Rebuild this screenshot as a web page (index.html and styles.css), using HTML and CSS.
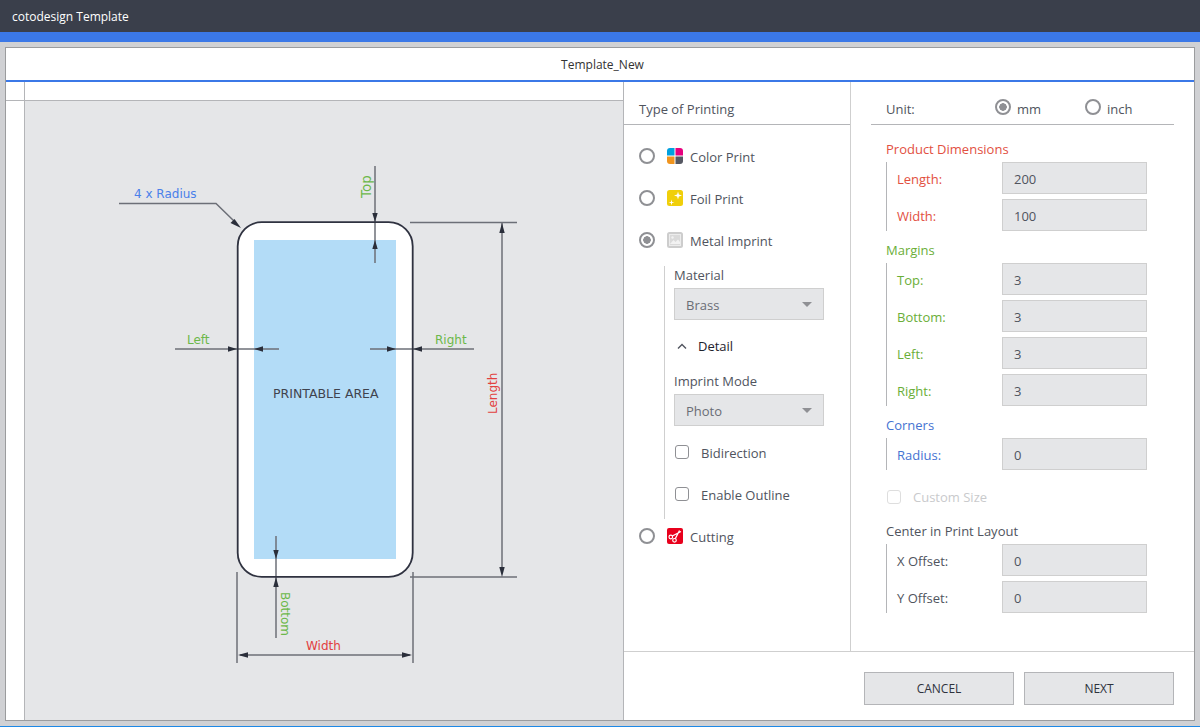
FILE: index.html
```html
<!DOCTYPE html>
<html lang="en">
<head>
<meta charset="utf-8">
<title>cotodesign Template</title>
<link rel="stylesheet" href="styles.css">
</head>
<body>
<header class="titlebar">cotodesign Template</header>
<div class="accent"></div>
<div class="workspace">
  <section class="window">
    <div class="window-title">Template_New</div>
    <div class="main">
      <div class="preview">
        <div class="ruler-top"><div class="ruler-corner"></div></div>
        <div class="preview-body">
          <div class="ruler-left"></div>
          <div class="canvas">
            <svg class="diagram" width="598" height="619" viewBox="25 101 598 619">
              <rect class="sheet" x="237.700" y="222.200" width="175" height="354.600" rx="24"/>
              <rect class="printable" x="254" y="240" width="142" height="319"/>
              <g class="dim">
                <path d="M119 203.500H216L234 221"/>
                <path d="M375 166V263"/>
                <path d="M175 349H279"/>
                <path d="M370 349H474"/>
                <path d="M276 536V638"/>
                <path d="M410 222.500H517"/>
                <path d="M410 577H517"/>
                <path d="M502 223V570"/>
                <path d="M237 572V663"/>
                <path d="M413 572V663"/>
                <path d="M240 655H410"/>
              </g>
              <g class="head">
                <path d="M241 228L230.500 223L234.500 219Z"/>
                <path d="M375 222L372.300 213H377.700Z"/>
                <path d="M375 240L372.300 249H377.700Z"/>
                <path d="M237 349L228 346.300V351.700Z"/>
                <path d="M254 349L263 346.300V351.700Z"/>
                <path d="M396 349L387 346.300V351.700Z"/>
                <path d="M413 349L422 346.300V351.700Z"/>
                <path d="M276 559L273.300 550H278.700Z"/>
                <path d="M276 577L273.300 587H278.700Z"/>
                <path d="M502 223L499.300 233H504.700Z"/>
                <path d="M502 577L499.300 567H504.700Z"/>
                <path d="M238 655L248 652.300V657.700Z"/>
                <path d="M412 655L402 652.300V657.700Z"/>
              </g>
              <rect class="sheet-edge" x="237.700" y="222.200" width="175" height="354.600" rx="24"/>
              <text class="t-blue" x="134" y="198">4 x Radius</text>
              <text class="t-green" x="187" y="344">Left</text>
              <text class="t-green" x="435" y="344">Right</text>
              <text class="t-green t-top" transform="translate(370.500 198) rotate(-90)">Top</text>
              <text class="t-green" transform="translate(281 592) rotate(90)">Bottom</text>
              <text class="t-red" transform="translate(497 414) rotate(-90)">Length</text>
              <text class="t-red" x="306" y="650">Width</text>
              <text class="t-dark" x="273" y="398">PRINTABLE AREA</text>
            </svg>
          </div>
        </div>
      </div>
      <div class="panel">
        <div class="panel-top">
          <div class="type-col">
            <div class="col-head">Type of Printing</div>
            <div class="type-list">
              <div class="type-row">
                <span class="radio"></span>
                <svg class="icon" viewBox="0 0 16 16"><path fill="#00a0df" d="M0 7.500V3a3 3 0 0 1 3-3h4.500v7.500z"/><path fill="#e6007e" d="M8.500 0H13a3 3 0 0 1 3 3v4.500H8.500z"/><path fill="#f0941e" d="M0 8.500h7.500V16H3a3 3 0 0 1-3-3z"/><path fill="#555862" d="M8.500 8.500H16V13a3 3 0 0 1-3 3H8.500z"/></svg>
                <span>Color Print</span>
              </div>
              <div class="type-row">
                <span class="radio"></span>
                <svg class="icon" viewBox="0 0 16 16"><rect width="16" height="16" rx="2.500" fill="#f0cf0a"/><path fill="#fff" d="M11 1.500l.9 3.100 3.100.9-3.100.9-.9 3.100-.9-3.100-3.100-.9 3.100-.9zM4.500 9.500l.6 2.400 2.400.6-2.400.6-.6 2.400-.6-2.400-2.400-.6 2.400-.6z"/></svg>
                <span>Foil Print</span>
              </div>
              <div class="type-row">
                <span class="radio radio-on"></span>
                <svg class="icon" viewBox="0 0 16 16"><rect width="16" height="16" rx="2.500" fill="#cdcdcd"/><rect x="2.500" y="2.500" width="11" height="11" fill="#dadada" stroke="#ececec"/><path fill="#f2f2f2" d="M3 12l3.500-4 2 2 2.500-2.500 2 2.500v2z"/><circle cx="5.500" cy="5.500" r="1.200" fill="#f2f2f2"/></svg>
                <span>Metal Imprint</span>
              </div>
              <div class="type-sub">
                <div class="field-label">Material</div>
                <div class="select"><span>Brass</span><i class="caret"></i></div>
                <div class="detail">
                  <svg class="chevron" viewBox="0 0 10 6"><path d="M1 5.500L5 1.500L9 5.500"/></svg>
                  <span>Detail</span>
                </div>
                <div class="field-label field-label-gap">Imprint Mode</div>
                <div class="select"><span>Photo</span><i class="caret"></i></div>
                <div class="check-list">
                  <div class="check-row"><span class="check"></span><span>Bidirection</span></div>
                  <div class="check-row"><span class="check"></span><span>Enable Outline</span></div>
                </div>
              </div>
              <div class="type-row type-row-last">
                <span class="radio"></span>
                <svg class="icon" viewBox="0 0 16 16"><rect width="16" height="16" rx="2" fill="#e8001c"/><g fill="none" stroke="#fff" stroke-width="1.200"><circle cx="3.800" cy="9" r="1.800"/><circle cx="7.500" cy="12.300" r="1.800"/><path d="M5.300 8L14 3.500M8.300 10.600L12.500 2.500"/></g></svg>
                <span>Cutting</span>
              </div>
            </div>
          </div>
          <div class="settings-col">
            <div class="unit-row">
              <span class="unit-label">Unit:</span>
              <span class="unit-opt unit-opt-first"><span class="radio radio-on"></span><span>mm</span></span>
              <span class="unit-opt"><span class="radio"></span><span>inch</span></span>
            </div>
            <div class="settings">
              <h3 class="sec-title sec-first c-red">Product Dimensions</h3>
              <div class="group c-red">
                <label class="f-row"><span class="f-label">Length:</span><input class="f-input" value="200" readonly></label>
                <label class="f-row"><span class="f-label">Width:</span><input class="f-input" value="100" readonly></label>
              </div>
              <h3 class="sec-title c-green">Margins</h3>
              <div class="group c-green">
                <label class="f-row"><span class="f-label">Top:</span><input class="f-input" value="3" readonly></label>
                <label class="f-row"><span class="f-label">Bottom:</span><input class="f-input" value="3" readonly></label>
                <label class="f-row"><span class="f-label">Left:</span><input class="f-input" value="3" readonly></label>
                <label class="f-row"><span class="f-label">Right:</span><input class="f-input" value="3" readonly></label>
              </div>
              <h3 class="sec-title c-blue">Corners</h3>
              <div class="group c-blue">
                <label class="f-row"><span class="f-label">Radius:</span><input class="f-input" value="0" readonly></label>
              </div>
              <div class="custom-row"><span class="check check-off"></span><span>Custom Size</span></div>
              <h3 class="sec-title sec-center">Center in Print Layout</h3>
              <div class="group">
                <label class="f-row"><span class="f-label">X Offset:</span><input class="f-input" value="0" readonly></label>
                <label class="f-row"><span class="f-label">Y Offset:</span><input class="f-input" value="0" readonly></label>
              </div>
            </div>
          </div>
        </div>
        <div class="footer">
          <button class="btn" type="button">CANCEL</button>
          <button class="btn" type="button">NEXT</button>
        </div>
      </div>
    </div>
  </section>
</div>
<div class="bottom-line"></div>
</body>
</html>
```

FILE: styles.css
```css
* { box-sizing: border-box; }
html, body { margin: 0; height: 100%; }
body {
  width: 1200px;
  height: 727px;
  overflow: hidden;
  display: flex;
  flex-direction: column;
  font: 13px/18px "Open Sans", sans-serif;
  color: #50545e;
  background: #d0d1d4;
}
.titlebar {
  height: 32px;
  flex: none;
  padding-left: 12px;
  background: #3a3f4b;
  color: #fff;
  font-size: 12px;
  line-height: 33px;
}
.accent { height: 10px; flex: none; background: #3b78e7; }
.workspace { flex: 1; min-height: 0; padding: 5px; display: flex; }
.bottom-line { height: 1px; flex: none; background: #1e88e5; }
.window {
  flex: 1;
  min-width: 0;
  display: flex;
  flex-direction: column;
  border: 1px solid #9b9c9e;
  background: #fff;
}
.window-title {
  height: 34px;
  flex: none;
  padding-left: 5px;
  border-bottom: 2px solid #3b78e7;
  text-align: center;
  font-size: 12px;
  line-height: 33px;
  color: #333;
}
.main { flex: 1; min-height: 0; display: flex; }
.preview {
  width: 618px;
  flex: none;
  display: flex;
  flex-direction: column;
  border-right: 1px solid #b4b5b8;
}
.ruler-top { height: 19px; flex: none; border-bottom: 1px solid #b4b5b8; }
.ruler-corner { width: 19px; height: 18px; border-right: 1px solid #b4b5b8; }
.preview-body { flex: 1; min-height: 0; display: flex; }
.ruler-left { width: 19px; flex: none; border-right: 1px solid #b4b5b8; }
.canvas { flex: 1; background: #e5e6e8; }
.diagram { display: block; }
.sheet { fill: #fff; }
.printable { fill: #b3dcf7; }
.sheet-edge { fill: none; stroke: #2f3240; stroke-width: 1.800; }
.dim path { fill: none; stroke: #6c6f77; stroke-width: 1.500; }
.head path { fill: #2a2e3a; }
.diagram text { font: 12px "DejaVu Sans", sans-serif; }
.diagram .t-blue { fill: #4a80ea; }
.diagram .t-green { fill: #6cb84a; }
.diagram .t-top { font-size: 13.500px; }
.diagram .t-red { fill: #e2403f; }
.diagram .t-dark { fill: #3f434e; font-size: 12.500px; }
.panel { flex: 1; min-width: 0; display: flex; flex-direction: column; }
.panel-top { flex: 1; min-height: 0; display: flex; }
.footer {
  height: 69px;
  flex: none;
  display: flex;
  justify-content: flex-end;
  gap: 10px;
  padding: 20px 20px 0 0;
  border-top: 1px solid #cfcfcf;
}
.btn {
  width: 150px;
  height: 33px;
  padding: 0;
  border: 1px solid #b4b5b8;
  background: #e5e6e8;
  font: 12px "Open Sans", sans-serif;
  color: #2e323c;
}
.type-col { width: 227px; flex: none; border-right: 1px solid #cfcfcf; }
.col-head {
  height: 43px;
  padding: 17px 0 0 15px;
  line-height: 20px;
  border-bottom: 1px solid #b4b5b8;
}
.type-list { padding-top: 11px; }
.type-row { height: 42px; display: flex; align-items: center; padding-left: 15px; }
.type-row-last { height: 36px; }
.radio {
  width: 16px;
  height: 16px;
  flex: none;
  margin-top: -2px;
  border: 2.500px solid #8f9094;
  border-radius: 50%;
  background: #fff;
}
.radio-on { background: radial-gradient(circle, #8f9094 0 3.500px, #fff 4px); }
.icon { width: 16px; height: 16px; flex: none; margin: -2px 7px 0 12px; }
.type-sub {
  margin: 4px 26px 0 40px;
  padding: 0 0 3px 9px;
  border-left: 1px solid #cfcfcf;
}
.field-label { height: 18px; margin-bottom: 4px; }
.field-label-gap { margin-top: 16px; }
.select {
  height: 32px;
  display: flex;
  align-items: center;
  justify-content: space-between;
  padding: 2px 11px 0 11px;
  border: 1px solid #cfcfcf;
  background: #e5e6e8;
  color: #6a6d75;
}
.caret {
  width: 0;
  height: 0;
  margin-top: -2px;
  border-left: 5.500px solid transparent;
  border-right: 5.500px solid transparent;
  border-top: 5px solid #8f9094;
}
.detail { height: 20px; margin-top: 16px; display: flex; align-items: center; color: #1e222c; }
.chevron { width: 10px; height: 6px; margin: 0 11px 0 3px; }
.chevron path { fill: none; stroke: #50545e; stroke-width: 1.400; }
.check-list { margin-top: 6px; }
.check-row { height: 42px; display: flex; align-items: center; }
.check {
  width: 14px;
  height: 14px;
  flex: none;
  margin: -2px 12px 0 1px;
  border: 1.500px solid #8f9094;
  border-radius: 3px;
}
.check-off { border-color: #dedede; }
.settings-col { flex: 1; min-width: 0; padding: 0 20px; }
.unit-row {
  height: 43px;
  display: flex;
  padding: 17px 0 0 15px;
  line-height: 20px;
  border-bottom: 1px solid #b4b5b8;
}
.unit-label { width: 109px; }
.unit-opt { display: flex; gap: 6px; }
.unit-opt-first { width: 90px; }
.unit-opt .radio { margin-top: 0; }
.settings { padding-left: 15px; }
.sec-title { height: 18px; margin: 10px 0 4px; font: inherit; line-height: 18px; }
.sec-first { margin-top: 15px; }
.sec-center { margin-top: 16px; }
.c-red { color: #e2503f; }
.c-green { color: #6aae38; }
.c-blue { color: #4573d2; }
.group {
  display: flex;
  flex-direction: column;
  gap: 5px;
  padding-left: 10px;
  border-left: 1px solid #b4b5b8;
}
.f-row { display: flex; align-items: center; }
.f-label { width: 105px; flex: none; padding-top: 2px; }
.f-input {
  width: 145px;
  height: 32px;
  padding: 2px 0 0 11px;
  border: 1px solid #cfcfcf;
  border-radius: 0;
  outline: 0;
  background: #e5e6e8;
  font: 13px "Open Sans", sans-serif;
  color: #50545e;
}
.custom-row {
  height: 18px;
  margin-top: 18px;
  display: flex;
  align-items: center;
  color: #c9cacc;
}
.custom-row .check { margin-top: 0; }
```
